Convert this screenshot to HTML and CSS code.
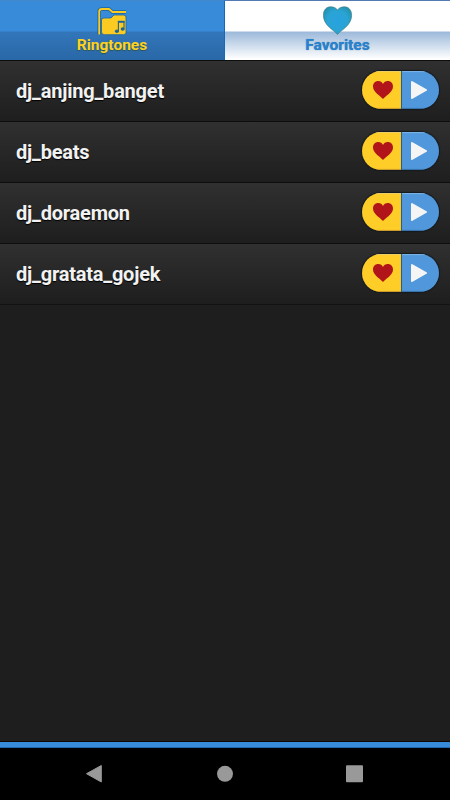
FILE: index.html
```html
<!DOCTYPE html>
<html lang="en">
<head>
  <meta charset="UTF-8" />
  <meta name="viewport" content="width=device-width, initial-scale=1.0" />
  <title>Ringtones</title>
  <link rel="stylesheet" href="styles.css">
</head>
<body>
  <nav class="tabs">
    <a class="tab active">
      <svg class="tab-icon" viewBox="0 0 30 30">
        <path d="M2.2 28.500V5.500Q2.200 3 5 3H12L15.500 6H29" fill="none" stroke="#1b669d" stroke-width="3.400"/>
        <path d="M4.500 25V14Q4.500 12 7 12H14L17 9H26.500Q29 9 29 11V26.500Q29 28.700 26.500 28.700H7.500Q4.500 28.700 4.500 26Z" fill="#fccb22" stroke="#1b669d" stroke-width=".8"/>
        <path d="M2.200 28.500V5.500Q2.200 3 5 3H12L15.500 6H29" fill="none" stroke="#fccb22" stroke-width="1.800"/>
        <path d="M21.400 25V15.500H27V22.500" fill="none" stroke="#1d6599" stroke-width="1.100"/>
        <path d="M20.900 15.800H27.500" fill="none" stroke="#1d6599" stroke-width="2"/>
        <ellipse cx="19.900" cy="25.300" rx="2" ry="1.700" fill="#1d6599"/>
        <ellipse cx="25.700" cy="23" rx="2" ry="1.700" fill="#1d6599"/>
      </svg>
      <span>Ringtones</span>
    </a>
    <a class="tab">
      <svg class="tab-icon" viewBox="0 0 30 30">
        <defs>
          <radialGradient id="blueHeart" gradientUnits="userSpaceOnUse" cx="14.500" cy="15" r="17">
            <stop offset="0" stop-color="#27a2e0"/>
            <stop offset=".6" stop-color="#2aa4d4"/>
            <stop offset="1" stop-color="#2390ac"/>
          </radialGradient>
        </defs>
        <path d="M14.500 28.500C12 24.500 .4 20 .4 9.200C.4 4 3.400 .8 7.600 .8C11 .8 13.600 2.300 14.500 4.300C15.400 2.300 18 .8 21.400 .8C25.600 .8 28.600 4 28.600 9.200C28.600 20 17 24.500 14.500 28.500Z" fill="url(#blueHeart)" stroke="#427f88" stroke-width=".7"/>
      </svg>
      <span>Favorites</span>
    </a>
  </nav>

  <main class="list" id="toneList">
    <!-- Ringtones will be loaded here -->
  </main>

  <div class="banner"></div>

  <footer class="navbar">
    <svg viewBox="0 0 450 52">
      <path d="M86.500 25.700L101.300 17.500V34Z" fill="#999" stroke="#999" stroke-width="1" stroke-linejoin="round"/>
      <circle cx="225" cy="25.800" r="8" fill="#999"/>
      <rect x="346" y="17.300" width="17" height="17" rx="1" fill="#999"/>
    </svg>
  </footer>

  <script>
    const tones = ["dj_anjing_banget", "dj_beats", "dj_doraemon", "dj_gratata_gojek"];
    const list = document.getElementById("toneList");

    tones.forEach(tone => {
      const row = document.createElement("div");
      row.className = "tone";
      row.innerHTML = `
        <span class="tone-name">${tone}</span>
        <div class="controls">
          <button class="like" aria-label="Favorite">
            <svg viewBox="0 0 20 18"><path d="M10 18C8 14.800 0 11.500 0 5.400C0 2.200 2.300 0 5.200 0C7.500 0 9.200 1.200 10 3C10.800 1.200 12.500 0 14.800 0C17.700 0 20 2.200 20 5.400C20 11.500 12 14.800 10 18Z" fill="#b11419"/></svg>
          </button>
          <button class="play" aria-label="Play">
            <svg viewBox="0 0 16 18"><path d="M1 1L15 9L1 17Z" fill="#f5f5f5" stroke="#f5f5f5" stroke-width="2" stroke-linejoin="round"/></svg>
          </button>
        </div>`;
      list.appendChild(row);
    });
  </script>
</body>
</html>
```
FILE: styles.css
```css
* {
  box-sizing: border-box;
}

body {
  margin: 0;
  height: 100vh;
  display: flex;
  flex-direction: column;
  overflow: hidden;
  font-family: Roboto, sans-serif;
  background-color: #1e1e1e;
}

.tabs {
  display: flex;
  height: 60px;
}

.tab {
  width: 50%;
  display: flex;
  flex-direction: column;
  align-items: center;
  padding-top: 5px;
  font-size: 15.500px;
  line-height: 20px;
  font-weight: bold;
  color: #2583d3;
  text-shadow: 0 0 1px #50718d;
  border-top: 1px solid #527bb5;
  background: linear-gradient(#fff 0, #fff 30px, #9cb9da 31px, #fff 58px);
}

.tab.active {
  color: #fdd220;
  text-shadow: 0 1px 1px #2c5552;
  border-top-color: #4388cb;
  border-right: 1px solid #1769b8;
  background: linear-gradient(#388bd8 0, #388bd8 30px, #3276b9 31px, #2968a8 59px);
}

.tab-icon {
  width: 30px;
  height: 30px;
  flex: none;
  margin-bottom: -1px;
}

.list {
  flex: 1;
}

.tone {
  display: flex;
  align-items: center;
  justify-content: space-between;
  height: 61px;
  padding: 0 11px 1px 16px;
  border-top: 1px solid #0d0d0d;
  background: linear-gradient(#303030, #1e1e1e);
}

.tone:last-child {
  height: 62px;
  border-bottom: 1px solid #121212;
}

.tone-name {
  color: #f2f2f2;
  font-size: 20px;
  letter-spacing: -0.22px;
  font-weight: bold;
  text-shadow: 0 1px 1px #000;
}

.controls {
  display: flex;
  width: 77px;
  height: 38px;
  margin-bottom: 2px;
  border-radius: 19px;
  overflow: hidden;
  box-shadow: 0 0 1px 1px #151a20;
}

.controls button {
  display: flex;
  align-items: center;
  border: none;
}

.controls .like {
  width: 40px;
  padding: 0 0 0 11px;
  border-right: 1px solid #315f80;
  background: #fecd27;
  box-shadow: inset 0 -1px 1px #c9982b, inset 0 1px 1px #edcf6c;
}

.like svg {
  width: 20px;
  height: 18px;
}

.controls .play {
  flex: 1;
  padding: 0 0 0 9px;
  background: #5098db;
  box-shadow: inset 0 -1px 1px #376fa8, inset 0 1px 1px #7eb3e6;
}

.play svg {
  width: 16px;
  height: 18px;
}

.banner {
  height: 7px;
  border-top: 1px solid #100800;
  border-bottom: 1px solid #2368ad;
  background: #388bd8;
}

.navbar {
  height: 52px;
  background: #000;
}

.navbar svg {
  display: block;
  width: 450px;
  height: 52px;
}
```
